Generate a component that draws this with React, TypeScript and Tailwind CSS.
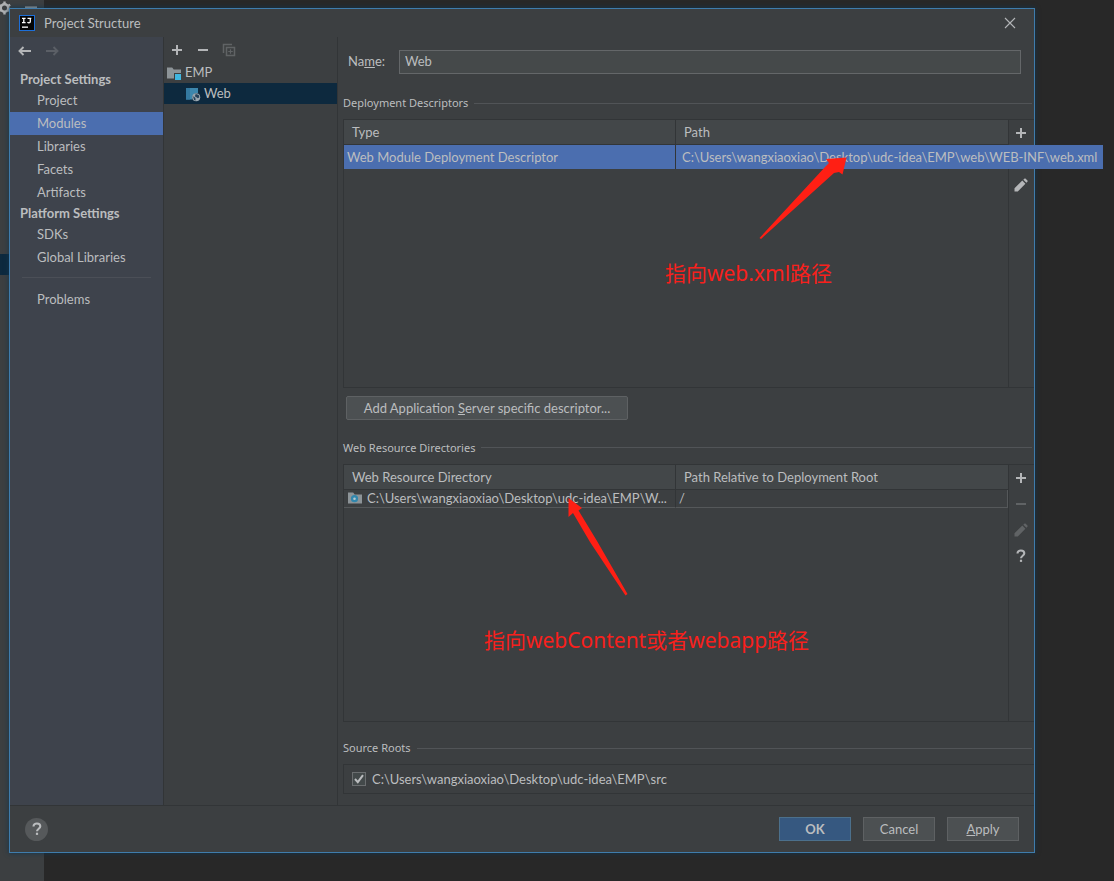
import { useState, type ReactNode } from "react";

const settingsItems = ["Project", "Modules", "Libraries", "Facets", "Artifacts"];
const platformItems = ["SDKs", "Global Libraries"];

function PlusIcon() {
    return (
        <svg width="16" height="16" viewBox="0 0 16 16" className="block">
            <path d="M8 3v10M3 8h10" stroke="currentColor" strokeWidth="2" />
        </svg>
    );
}

function MinusIcon() {
    return (
        <svg width="16" height="16" viewBox="0 0 16 16" className="block">
            <path d="M3 8h10" stroke="currentColor" strokeWidth="2" />
        </svg>
    );
}

function PencilIcon() {
    return (
        <svg width="16" height="16" viewBox="0 0 16 16" className="block">
            <path d="M1.500 14.500v-3.300L9.300 3.600l3.100 3.100-7.600 7.800zM10.300 2.700l1-1c.5-.4 1-.4 1.400 0l1.700 1.700c.4.4.4 1 0 1.400l-1 1z" fill="currentColor" />
        </svg>
    );
}

function QuestionIcon() {
    return (
        <svg width="16" height="16" viewBox="0 0 16 16" className="block">
            <path d="M4.500 5.600C4.500 3.600 5.900 2.500 7.900 2.500s3.400 1.100 3.400 2.800c0 2.500-3.300 2.400-3.300 5" fill="none" stroke="currentColor" strokeWidth="2.100" />
            <path d="M6.900 11.700h2.200v2.200H6.900z" fill="currentColor" />
        </svg>
    );
}

function CopyIcon() {
    return (
        <svg width="16" height="16" viewBox="0 0 16 16" className="block">
            <path d="M2.500 11V2.500H11M5.500 5.500h8v8h-8z" fill="none" stroke="currentColor" strokeWidth="1.500" />
            <path d="M9.500 7.200v4.600M7.200 9.500h4.600" stroke="currentColor" strokeWidth="1.200" />
        </svg>
    );
}

function ArrowIcon({ className = "" }: { className?: string }) {
    return (
        <svg width="16" height="16" viewBox="0 0 16 16" className={`block ${className}`}>
            <path d="M14 8H3M6.500 4L2.500 8l4 4" fill="none" stroke="currentColor" strokeWidth="1.900" />
        </svg>
    );
}

function LogoIcon() {
    return (
        <svg width="16" height="16" viewBox="0 0 16 16" className="block">
            <path d="M0 0h16v16H0z" fill="#1d6fd8" />
            <path d="M1 1h14v14H1z" fill="#050505" />
            <path d="M3 3.300h3.600M4.800 3v5M3 7.700h3.600M8.500 3.300h3.800M11.300 3v3.400c0 1-.6 1.400-1.300 1.400s-1.200-.3-1.500-.7" fill="none" stroke="#fff" strokeWidth="1.300" />
            <path d="M3 11.500h6v1.300H3z" fill="#fff" />
        </svg>
    );
}

function ProjectFolderIcon() {
    return (
        <svg width="16" height="16" viewBox="0 0 16 16" className="block shrink-0">
            <path d="M1 2.500h5.200l1.500 2H15V8H8v5.500H1z" fill="#8d9498" />
            <path d="M9 9h6v6H9z" fill="#40b6e0" />
        </svg>
    );
}

function WebFacetIcon() {
    return (
        <svg width="16" height="16" viewBox="0 0 16 16" className="block shrink-0">
            <path d="M1 2h12v5.100a5 5 0 0 0-5.600 6.400H1z" fill="#3d87ad" />
            <path d="M1 2h4v11.500H1z" fill="#3479a0" />
            <circle cx="11.200" cy="11.200" r="4" fill="#9aa7b0" />
            <path d="M8 10.200l2.300 1.500.4 2.800-1.600-.5zM10.800 8l2.900.9.7 2.300-1.500 1.100-1.900-1.300-1.200-.8z" fill="#23415a" />
        </svg>
    );
}

function WebFolderIcon() {
    return (
        <svg width="16" height="16" viewBox="0 0 16 16" className="block shrink-0">
            <path d="M1 2.500h5.200l1.500 2H15v9H1z" fill="#8d9498" />
            <circle cx="7.500" cy="8.700" r="3.600" fill="#3187ad" />
            <circle cx="7.500" cy="8.700" r="1.300" fill="#b5c7cf" />
        </svg>
    );
}

interface ToolProps {
    label: string;
    disabled?: boolean;
    children: ReactNode;
}

function Tool({ label, disabled, children }: ToolProps) {
    return (
        <button aria-label={label} disabled={disabled} className="flex h-[26px] w-[26px] items-center justify-center text-[#b4b6b8] disabled:text-[#606365]">
            {children}
        </button>
    );
}

function SectionTitle({ children }: { children: ReactNode }) {
    return (
        <div className="flex h-4 items-center gap-1.5 pr-0.5">
            <h2 className="font-['Noto_Sans',sans-serif] text-[11px] leading-4">{children}</h2>
            <div className="h-px flex-1 bg-[#515457]" />
        </div>
    );
}

interface NavItemProps {
    name: string;
    active: boolean;
    onSelect: () => void;
}

function NavItem({ name, active, onSelect }: NavItemProps) {
    return (
        <li>
            <button onClick={onSelect} className={`${active ? "bg-[#4b6eaf]" : ""} block h-[23px] w-full pb-0.5 pl-[27px] text-left leading-5`}>{name}</button>
        </li>
    );
}

function HeaderRow({ left, right }: { left: string; right: string }) {
    return (
        <thead className="bg-[#434749]">
            <tr className="h-[25px]">
                <th className="border-r border-b border-[#323537] pl-2 text-left font-normal">{left}</th>
                <th className="border-b border-[#323537] pl-2 text-left font-normal">{right}</th>
            </tr>
        </thead>
    );
}

export default function App() {
    const [page, setPage] = useState("Modules");
    const [name, setName] = useState("Web");
    const [rootChecked, setRootChecked] = useState(true);

    return (
        <div className="relative flex min-h-screen bg-[#282828] pt-2 pr-[79px] pb-7 pl-[9px] font-['Lato','Noto_Sans_CJK_SC',sans-serif] text-[13px] leading-5 text-[#bbbdbf]">
            {/* strip of the IDE window behind the dialog */}
            <div className="absolute inset-y-0 left-0 w-11 bg-[#3c3f41]">
                <svg width="44" height="16" viewBox="0 0 44 16" className="block">
                    <circle cx="4.500" cy="8" r="3.800" fill="none" stroke="#afb1b3" strokeWidth="2.600" />
                    <path d="M4.500 1.500v3M4.500 12v2.500M-1 5l2 1M8 10l2.200 1.200M10.200 4.800L8 6M-1 11l2-1" stroke="#afb1b3" strokeWidth="2.400" />
                    <path d="M25 7.500h12" stroke="#afb1b3" strokeWidth="2" />
                </svg>
                <div className="mt-[238px] h-[21px] bg-[#0d293e]" />
            </div>

            <div role="dialog" aria-label="Project Structure" className="relative flex min-w-0 flex-1 flex-col border border-[#3f7cac] bg-[#3c3f41] shadow-[0_0_5px_#12344d]">
                <div className="flex h-7 shrink-0 items-center pr-4 pl-[9px]">
                    <LogoIcon />
                    <h1 className="flex-1 pl-[9px]">Project Structure</h1>
                    <button aria-label="Close">
                        <svg width="16" height="16" viewBox="0 0 16 16" className="block">
                            <path d="M3 3l10 10M13 3L3 13" stroke="#b4b6b8" strokeWidth="1.100" />
                        </svg>
                    </button>
                </div>

                <div className="flex min-h-0 flex-1">
                    <nav className="w-[153px] shrink-0 bg-[#3e434c]">
                        <div className="flex h-8 items-start gap-[11px] pt-1.5 pl-[7px]">
                            <button aria-label="Back" className="text-[#b4b6b8]"><ArrowIcon /></button>
                            <button aria-label="Forward" disabled className="text-[#5b5f66]"><ArrowIcon className="rotate-180" /></button>
                        </div>
                        <h2 className="h-5 pl-2.5 font-bold">Project Settings</h2>
                        <ul>
                            {settingsItems.map((item) => (
                                <NavItem key={item} name={item} active={page === item} onSelect={() => setPage(item)} />
                            ))}
                        </ul>
                        <h2 className="h-[19px] pl-2.5 leading-[18px] font-bold">Platform Settings</h2>
                        <ul>
                            {platformItems.map((item) => (
                                <NavItem key={item} name={item} active={page === item} onSelect={() => setPage(item)} />
                            ))}
                        </ul>
                        <div className="mx-3 mt-2 mb-2.5 h-px bg-[#4b4f57]" />
                        <ul>
                            <NavItem name="Problems" active={page === "Problems"} onSelect={() => setPage("Problems")} />
                        </ul>
                    </nav>

                    <div className="w-[175px] shrink-0 border-x border-[#323537]">
                        <div className="flex h-[25px] items-start">
                            <Tool label="Add module"><PlusIcon /></Tool>
                            <Tool label="Remove module"><MinusIcon /></Tool>
                            <Tool label="Copy module" disabled><CopyIcon /></Tool>
                        </div>
                        <ul>
                            <li className="flex h-[21px] items-center gap-[3px] pl-0.5 leading-[18px]"><ProjectFolderIcon /><span className="pb-0.5">EMP</span></li>
                            <li className="flex h-[21px] items-center gap-[3px] bg-[#0d293e] pl-[21px] leading-[18px]"><WebFacetIcon /><span className="pb-0.5">Web</span></li>
                        </ul>
                    </div>

                    <main className="flex min-w-0 flex-1 flex-col pt-[13px] pb-[11px] pl-[5px]">
                        <div className="mb-[21px] flex items-center pr-[13px] pl-[5px]">
                            <label htmlFor="name" className="w-[51px] pb-0.5">Na<u>m</u>e:</label>
                            <input id="name" value={name} onChange={(e) => setName(e.target.value)} className="h-6 min-w-0 flex-1 border border-[#646769] bg-[#45494a] px-[5px] pb-0.5 outline-none" />
                        </div>

                        <SectionTitle>Deployment Descriptors</SectionTitle>
                        <div className="relative mt-2 flex grow basis-[268px] border-y border-l border-[#323537]">
                            <div className="min-w-0 flex-1 border-r border-[#323537]">
                                <table className="w-full table-fixed border-separate border-spacing-0">
                                    <HeaderRow left="Type" right="Path" />
                                    <tbody>
                                        <tr className="h-6 bg-[#4b6eaf]">
                                            <td className="border-r border-[#323537] pl-[3px] whitespace-nowrap">Web Module Deployment Descriptor</td>
                                            <td className="relative">
                                                {/* the full path runs past the edge of the dialog */}
                                                <div className="absolute top-0 left-0 z-10 h-6 bg-[#4b6eaf] pr-1.5 pl-1.5 leading-6 whitespace-nowrap">C:\Users\wangxiaoxiao\Desktop\udc-idea\EMP\web\WEB-INF\web.xml</div>
                                            </td>
                                        </tr>
                                    </tbody>
                                </table>
                            </div>
                            <div className="flex w-[25px] flex-col items-end">
                                <Tool label="Add descriptor"><PlusIcon /></Tool>
                                <Tool label="Remove descriptor"><MinusIcon /></Tool>
                                <Tool label="Edit descriptor"><PencilIcon /></Tool>
                            </div>
                            <svg width="94" height="86" viewBox="0 0 94 86" className="absolute top-[34px] left-[414px] z-20">
                                <path d="M1.500 84L67.500 12.500 71 9l-3-4 20.500-1.500-4 17-3.500-2.500-5 1L3 85z" fill="#ff1f14" />
                            </svg>
                            <p className="absolute top-[137px] left-[321px] z-20 font-['Noto_Sans','Noto_Sans_CJK_SC',sans-serif] text-[21px] leading-8 whitespace-nowrap text-[#f8201c]">指向web.xml路径</p>
                        </div>

                        <button className="mt-2 mb-5 ml-[3px] h-6 w-[282px] rounded-[2px] border border-[#5e6163] bg-[#4c5052] whitespace-nowrap">
                            Add Application <u>S</u>erver specific descriptor...
                        </button>

                        <SectionTitle>Web Resource Directories</SectionTitle>
                        <div className="relative mt-2 flex grow basis-[258px] border-y border-l border-[#323537]">
                            <div className="min-w-0 flex-1 border-r border-[#323537]">
                                <table className="w-full table-fixed border-separate border-spacing-0">
                                    <HeaderRow left="Web Resource Directory" right="Path Relative to Deployment Root" />
                                    <tbody>
                                        <tr className="h-[18px] leading-4">
                                            <td className="border-r border-b border-r-[#323537] border-b-[#55585a] pl-[3px]">
                                                <div className="flex items-center gap-1">
                                                    <WebFolderIcon />
                                                    <span className="whitespace-nowrap">C:\Users\wangxiaoxiao\Desktop\udc-idea\EMP\W...</span>
                                                </div>
                                            </td>
                                            <td className="border-r border-b border-[#55585a] pl-[3px]">/</td>
                                        </tr>
                                    </tbody>
                                </table>
                            </div>
                            <div className="flex w-[25px] flex-col items-end">
                                <Tool label="Add directory"><PlusIcon /></Tool>
                                <Tool label="Remove directory" disabled><MinusIcon /></Tool>
                                <Tool label="Edit directory" disabled><PencilIcon /></Tool>
                                <Tool label="Directory help"><QuestionIcon /></Tool>
                            </div>
                            <svg width="64" height="100" viewBox="0 0 64 100" className="absolute top-[32px] left-[221px] z-20">
                                <path d="M3.500 1L17 11l-3.500 2.500L32 44l30.500 53-2 1.500L25 45 8 16l-4.500 4z" fill="#ff1f14" />
                            </svg>
                            <p className="absolute top-[159px] left-[140px] z-20 font-['Noto_Sans','Noto_Sans_CJK_SC',sans-serif] text-[21px] leading-8 whitespace-nowrap text-[#f8201c]">指向webContent或者webapp路径</p>
                        </div>

                        <div className="mt-[18px]">
                            <SectionTitle>Source Roots</SectionTitle>
                        </div>
                        <div className="mt-2 flex h-[30px] shrink-0 items-center border-y border-l border-[#323537] pl-2">
                            <label className="flex items-center gap-1.5">
                                <span className="grid">
                                    <input type="checkbox" checked={rootChecked} onChange={() => setRootChecked(!rootChecked)} className="peer col-start-1 row-start-1 h-3.5 w-3.5 appearance-none border border-[#6b6e70] bg-[#43494a]" />
                                    <svg width="14" height="14" viewBox="0 0 14 14" className="pointer-events-none invisible col-start-1 row-start-1 peer-checked:visible">
                                        <path d="M3 7l2.800 3.200L11 3.200" fill="none" stroke="#bbbdbf" strokeWidth="2" />
                                    </svg>
                                </span>
                                C:\Users\wangxiaoxiao\Desktop\udc-idea\EMP\src
                            </label>
                        </div>
                    </main>
                </div>

                <div className="flex h-[47px] shrink-0 items-center gap-3 border-t border-[#323537] pr-[15px] pl-[15px]">
                    <button aria-label="Help" className="mr-auto flex h-[23px] w-[23px] items-center justify-center rounded-full bg-[#56595b] text-[#bbbdbf]">
                        <QuestionIcon />
                    </button>
                    <button className="h-6 w-[72px] border border-[#4c708c] bg-[#365880] font-bold">OK</button>
                    <button className="h-6 w-[72px] border border-[#5e6163] bg-[#4c5052]">Cancel</button>
                    <button className="h-6 w-[72px] border border-[#5e6163] bg-[#4c5052]"><u>A</u>pply</button>
                </div>
            </div>
        </div>
    );
}
